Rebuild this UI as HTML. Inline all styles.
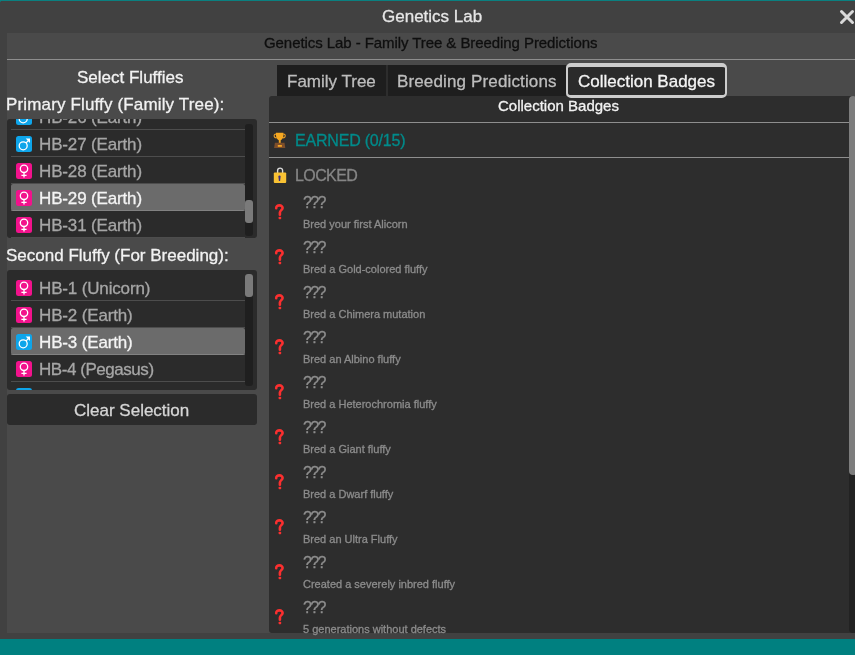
<!DOCTYPE html>
<html><head><meta charset="utf-8">
<style>
*{margin:0;padding:0;box-sizing:border-box}
body{will-change:transform}
html,body{width:855px;height:655px;overflow:hidden;background:#414141;font-family:"Liberation Sans",sans-serif}
.a{position:absolute}
.t{position:absolute;white-space:nowrap;line-height:1;-webkit-text-stroke:0.3px currentColor}
#teal-top{left:0;top:0;width:855px;height:1px;background:#0a8080}
#teal-bot{left:0;top:639px;width:855px;height:16px;background:#008080}
#panel{left:7px;top:33px;width:848px;height:600px;background:#4a4a4a}
.hline{height:1px;background:#8e8e8e}
.list{background:#2b2b2b;border-radius:3px;overflow:hidden}
.row{position:absolute;left:4px;width:234px;height:27px}
.sep{position:absolute;left:4px;width:234px;height:1px;background:rgba(255,255,255,0.16);z-index:2}
.sel{position:absolute;left:4px;width:234px;height:26px;background:#6b6b6b;border-radius:2px}
.ic{position:absolute;left:9px;width:16px;height:16px}
.ic svg{display:block}
.it{position:absolute;left:32px;font-size:17px;letter-spacing:-0.15px;color:#a6a6a6;white-space:nowrap;line-height:17px;-webkit-text-stroke:0.3px currentColor}
.sb{position:absolute;width:8px;background:#1f1f1f;border-radius:3px}
.gr{position:absolute;width:8px;background:#7a7a7a;border-radius:3px}
.tab{position:absolute;top:65px;height:31px;background:#1e1e1e}
.q{position:absolute;left:270px;width:20px;height:22px}
.q svg{display:block}
.qq{left:303px;font-size:16px;color:#8e8e8e;letter-spacing:-1.6px}
.ds{left:303px;font-size:11px;color:#8c8c8c}
</style></head><body>
<div class="a" id="teal-top"></div>
<div class="a" style="left:0;top:1px;width:1px;height:1px;background:#1a6a6a"></div>
<div class="t" style="left:382px;top:8px;font-size:17px;color:#e6e6e6">Genetics Lab</div>
<svg class="a" style="left:839px;top:9px" width="16" height="16" viewBox="0 0 16 16"><path d="M2.5 2.5L13.5 13.5M13.5 2.5L2.5 13.5" stroke="#d9d9d9" stroke-width="3" stroke-linecap="round"/></svg>
<div class="a" id="panel"></div>
<div class="t" style="left:264px;top:35px;font-size:15px;letter-spacing:-0.07px;color:#0f0f0f">Genetics Lab - Family Tree &amp; Breeding Predictions</div>
<div class="a hline" style="left:7px;top:59px;width:848px"></div>

<!-- left column -->
<div class="t" style="left:77px;top:69px;font-size:17px;color:#f2f2f2">Select Fluffies</div>
<div class="t" style="left:6px;top:96px;font-size:17px;letter-spacing:0.15px;color:#f2f2f2">Primary Fluffy (Family Tree):</div>

<div class="a list" style="left:7px;top:119px;width:250px;height:119px">
  <div class="sep" style="top:10px"></div>
  <div class="sep" style="top:37px"></div>
  <div class="sep" style="top:64px"></div>
  <div class="sep" style="top:118px"></div>
  <div class="sep" style="top:91px"></div>
  <div class="sel" style="top:65px;height:27px"></div>
  <div class="ic" style="top:-10px"><svg width="16" height="16" viewBox="0 0 16 16"><rect x="0" y="0" width="16" height="16" rx="2.5" fill="#0ea5ea"/><circle cx="7.2" cy="9.8" r="4" fill="none" stroke="#fff" stroke-width="1.3"/><path d="M10.1 6.9L13.2 3.8" stroke="#fff" stroke-width="1.3"/><path d="M9.7 2.6H14V6.9Z" fill="#fff"/></svg></div><div class="it" style="top:-10px">HB-26 (Earth)</div>
  <div class="ic" style="top:17px"><svg width="16" height="16" viewBox="0 0 16 16"><rect x="0" y="0" width="16" height="16" rx="2.5" fill="#0ea5ea"/><circle cx="7.2" cy="9.8" r="4" fill="none" stroke="#fff" stroke-width="1.3"/><path d="M10.1 6.9L13.2 3.8" stroke="#fff" stroke-width="1.3"/><path d="M9.7 2.6H14V6.9Z" fill="#fff"/></svg></div><div class="it" style="top:17px">HB-27 (Earth)</div>
  <div class="ic" style="top:44px"><svg width="16" height="16" viewBox="0 0 16 16"><rect x="0" y="0" width="16" height="16" rx="2.5" fill="#f2128c"/><circle cx="8" cy="5.8" r="3.7" fill="none" stroke="#fff" stroke-width="1.3"/><path d="M8 9.5V14.5M5.4 12.3H10.6" stroke="#fff" stroke-width="1.3"/></svg></div><div class="it" style="top:44px">HB-28 (Earth)</div>
  <div class="ic" style="top:71px"><svg width="16" height="16" viewBox="0 0 16 16"><rect x="0" y="0" width="16" height="16" rx="2.5" fill="#f2128c"/><circle cx="8" cy="5.8" r="3.7" fill="none" stroke="#fff" stroke-width="1.3"/><path d="M8 9.5V14.5M5.4 12.3H10.6" stroke="#fff" stroke-width="1.3"/></svg></div><div class="it" style="top:71px;color:#f4f4f4">HB-29 (Earth)</div>
  <div class="ic" style="top:98px"><svg width="16" height="16" viewBox="0 0 16 16"><rect x="0" y="0" width="16" height="16" rx="2.5" fill="#f2128c"/><circle cx="8" cy="5.8" r="3.7" fill="none" stroke="#fff" stroke-width="1.3"/><path d="M8 9.5V14.5M5.4 12.3H10.6" stroke="#fff" stroke-width="1.3"/></svg></div><div class="it" style="top:98px">HB-31 (Earth)</div>
  <div class="sb" style="left:238px;top:5px;height:112px"></div>
  <div class="gr" style="left:238px;top:81px;height:23px"></div>
</div>

<div class="t" style="left:6px;top:247px;font-size:17px;color:#f2f2f2">Second Fluffy (For Breeding):</div>
<div class="a list" style="left:7px;top:270px;width:250px;height:120px">
  <div class="sep" style="top:30px"></div>
  <div class="sep" style="top:57px"></div>
  <div class="sep" style="top:84px"></div>
  <div class="sep" style="top:111px"></div>
  <div class="sel" style="top:58px;height:27px"></div>
  <div class="ic" style="top:10px"><svg width="16" height="16" viewBox="0 0 16 16"><rect x="0" y="0" width="16" height="16" rx="2.5" fill="#f2128c"/><circle cx="8" cy="5.8" r="3.7" fill="none" stroke="#fff" stroke-width="1.3"/><path d="M8 9.5V14.5M5.4 12.3H10.6" stroke="#fff" stroke-width="1.3"/></svg></div><div class="it" style="top:10px">HB-1 (Unicorn)</div>
  <div class="ic" style="top:37px"><svg width="16" height="16" viewBox="0 0 16 16"><rect x="0" y="0" width="16" height="16" rx="2.5" fill="#f2128c"/><circle cx="8" cy="5.8" r="3.7" fill="none" stroke="#fff" stroke-width="1.3"/><path d="M8 9.5V14.5M5.4 12.3H10.6" stroke="#fff" stroke-width="1.3"/></svg></div><div class="it" style="top:37px">HB-2 (Earth)</div>
  <div class="ic" style="top:64px"><svg width="16" height="16" viewBox="0 0 16 16"><rect x="0" y="0" width="16" height="16" rx="2.5" fill="#0ea5ea"/><circle cx="7.2" cy="9.8" r="4" fill="none" stroke="#fff" stroke-width="1.3"/><path d="M10.1 6.9L13.2 3.8" stroke="#fff" stroke-width="1.3"/><path d="M9.7 2.6H14V6.9Z" fill="#fff"/></svg></div><div class="it" style="top:64px;color:#f4f4f4">HB-3 (Earth)</div>
  <div class="ic" style="top:91px"><svg width="16" height="16" viewBox="0 0 16 16"><rect x="0" y="0" width="16" height="16" rx="2.5" fill="#f2128c"/><circle cx="8" cy="5.8" r="3.7" fill="none" stroke="#fff" stroke-width="1.3"/><path d="M8 9.5V14.5M5.4 12.3H10.6" stroke="#fff" stroke-width="1.3"/></svg></div><div class="it" style="top:91px;letter-spacing:-0.45px">HB-4 (Pegasus)</div>
  <div class="ic" style="top:118px"><svg width="16" height="16" viewBox="0 0 16 16"><rect x="0" y="0" width="16" height="16" rx="2.5" fill="#0ea5ea"/><circle cx="7.2" cy="9.8" r="4" fill="none" stroke="#fff" stroke-width="1.3"/><path d="M10.1 6.9L13.2 3.8" stroke="#fff" stroke-width="1.3"/><path d="M9.7 2.6H14V6.9Z" fill="#fff"/></svg></div>
  <div class="sb" style="left:238px;top:4px;height:112px"></div>
  <div class="gr" style="left:238px;top:4px;height:23px"></div>
</div>

<div class="a" style="left:7px;top:394px;width:250px;height:31px;background:#2b2b2b;border-radius:3px"></div>
<div class="t" style="left:74px;top:402px;font-size:17px;color:#d6d6d6">Clear Selection</div>

<!-- tabs -->
<div class="a" style="left:386px;top:65px;width:2px;height:31px;background:#2d2d2d"></div>
<div class="tab" style="left:277px;width:109px"></div>
<div class="tab" style="left:388px;width:178px"></div>
<div class="t" style="left:287px;top:73px;font-size:17px;color:#bdbdbd">Family Tree</div>
<div class="t" style="left:397px;top:73px;font-size:17px;letter-spacing:0.14px;color:#bdbdbd">Breeding Predictions</div>

<!-- right panel -->
<div class="a" style="left:269px;top:96px;width:586px;height:537px;background:#2d2d2d;border-radius:3px 0 0 3px"></div>
<div class="a" style="left:566px;top:63px;width:161px;height:35px;background:#2b2b2b;border:solid #cdcdcd;border-width:4px 2px 3px 2px;border-radius:5px"></div>
<div class="t" style="left:578px;top:73px;font-size:17px;color:#f4f4f4">Collection Badges</div>

<div class="t" style="left:498px;top:98px;font-size:15px;color:#f2f2f2">Collection Badges</div>
<div class="a hline" style="left:269px;top:122px;width:580px"></div>
<svg class="a" style="left:270px;top:130px" width="20" height="20" viewBox="0 0 20 20"><path d="M6.2 4.2C3.6 3.6 3.2 7.4 6.6 7.9M13.2 4.2C15.8 3.6 16.2 7.4 12.8 7.9" fill="none" stroke="#e69a24" stroke-width="1.1"/><path d="M6 2.8H13.4V5.8C13.4 8.4 11.6 9.9 10.7 10.3V12.9H8.8V10.3C7.9 9.9 6 8.4 6 5.8Z" fill="#f6a821"/><path d="M4.9 12.8H14.5L15.3 17.9H4.1Z" fill="#7d4e2a"/><rect x="7.8" y="15" width="4.1" height="1.8" fill="#f3a524"/></svg>
<div class="t" style="left:295px;top:133px;font-size:16px;letter-spacing:-0.2px;color:#018b8b">EARNED (0/15)</div>
<div class="a hline" style="left:269px;top:157px;width:580px"></div>
<svg class="a" style="left:270px;top:165px" width="20" height="20" viewBox="0 0 20 20"><path d="M7.6 8.2V5.6A2.5 2.5 0 0 1 12.6 5.6V8.2" fill="none" stroke="#d9d9d9" stroke-width="1.4"/><rect x="3.8" y="7.6" width="12.4" height="10.4" rx="1" fill="#f9c233"/><path d="M8.4 11.5A1.1 1.1 0 0 1 10.6 11.5L10.1 15.9H8.9Z" fill="#3b2c7e"/></svg>
<div class="t" style="left:295px;top:168px;font-size:16px;letter-spacing:-0.6px;color:#868686">LOCKED</div>

<div id="badges">
<div class="q" style="top:200px"><svg width="20" height="22" viewBox="0 0 20 22"><path d="M6.2 8.2C6.1 6.3 7.6 5.4 9.5 5.4C11.3 5.4 12.6 6.5 12.6 8C12.6 9.9 10 10.4 9.9 12.5V14.7" fill="none" stroke="#fb2f2f" stroke-width="2.6" stroke-linecap="round"/><rect x="8.6" y="16.8" width="2.6" height="2.4" rx="0.7" fill="#fb2f2f"/></svg></div>
<div class="t qq" style="top:195px">???</div>
<div class="t ds" style="top:219px">Bred your first Alicorn</div>
<div class="q" style="top:245px"><svg width="20" height="22" viewBox="0 0 20 22"><path d="M6.2 8.2C6.1 6.3 7.6 5.4 9.5 5.4C11.3 5.4 12.6 6.5 12.6 8C12.6 9.9 10 10.4 9.9 12.5V14.7" fill="none" stroke="#fb2f2f" stroke-width="2.6" stroke-linecap="round"/><rect x="8.6" y="16.8" width="2.6" height="2.4" rx="0.7" fill="#fb2f2f"/></svg></div>
<div class="t qq" style="top:240px">???</div>
<div class="t ds" style="top:264px">Bred a Gold-colored fluffy</div>
<div class="q" style="top:290px"><svg width="20" height="22" viewBox="0 0 20 22"><path d="M6.2 8.2C6.1 6.3 7.6 5.4 9.5 5.4C11.3 5.4 12.6 6.5 12.6 8C12.6 9.9 10 10.4 9.9 12.5V14.7" fill="none" stroke="#fb2f2f" stroke-width="2.6" stroke-linecap="round"/><rect x="8.6" y="16.8" width="2.6" height="2.4" rx="0.7" fill="#fb2f2f"/></svg></div>
<div class="t qq" style="top:285px">???</div>
<div class="t ds" style="top:309px">Bred a Chimera mutation</div>
<div class="q" style="top:335px"><svg width="20" height="22" viewBox="0 0 20 22"><path d="M6.2 8.2C6.1 6.3 7.6 5.4 9.5 5.4C11.3 5.4 12.6 6.5 12.6 8C12.6 9.9 10 10.4 9.9 12.5V14.7" fill="none" stroke="#fb2f2f" stroke-width="2.6" stroke-linecap="round"/><rect x="8.6" y="16.8" width="2.6" height="2.4" rx="0.7" fill="#fb2f2f"/></svg></div>
<div class="t qq" style="top:330px">???</div>
<div class="t ds" style="top:354px">Bred an Albino fluffy</div>
<div class="q" style="top:380px"><svg width="20" height="22" viewBox="0 0 20 22"><path d="M6.2 8.2C6.1 6.3 7.6 5.4 9.5 5.4C11.3 5.4 12.6 6.5 12.6 8C12.6 9.9 10 10.4 9.9 12.5V14.7" fill="none" stroke="#fb2f2f" stroke-width="2.6" stroke-linecap="round"/><rect x="8.6" y="16.8" width="2.6" height="2.4" rx="0.7" fill="#fb2f2f"/></svg></div>
<div class="t qq" style="top:375px">???</div>
<div class="t ds" style="top:399px">Bred a Heterochromia fluffy</div>
<div class="q" style="top:425px"><svg width="20" height="22" viewBox="0 0 20 22"><path d="M6.2 8.2C6.1 6.3 7.6 5.4 9.5 5.4C11.3 5.4 12.6 6.5 12.6 8C12.6 9.9 10 10.4 9.9 12.5V14.7" fill="none" stroke="#fb2f2f" stroke-width="2.6" stroke-linecap="round"/><rect x="8.6" y="16.8" width="2.6" height="2.4" rx="0.7" fill="#fb2f2f"/></svg></div>
<div class="t qq" style="top:420px">???</div>
<div class="t ds" style="top:444px">Bred a Giant fluffy</div>
<div class="q" style="top:470px"><svg width="20" height="22" viewBox="0 0 20 22"><path d="M6.2 8.2C6.1 6.3 7.6 5.4 9.5 5.4C11.3 5.4 12.6 6.5 12.6 8C12.6 9.9 10 10.4 9.9 12.5V14.7" fill="none" stroke="#fb2f2f" stroke-width="2.6" stroke-linecap="round"/><rect x="8.6" y="16.8" width="2.6" height="2.4" rx="0.7" fill="#fb2f2f"/></svg></div>
<div class="t qq" style="top:465px">???</div>
<div class="t ds" style="top:489px">Bred a Dwarf fluffy</div>
<div class="q" style="top:515px"><svg width="20" height="22" viewBox="0 0 20 22"><path d="M6.2 8.2C6.1 6.3 7.6 5.4 9.5 5.4C11.3 5.4 12.6 6.5 12.6 8C12.6 9.9 10 10.4 9.9 12.5V14.7" fill="none" stroke="#fb2f2f" stroke-width="2.6" stroke-linecap="round"/><rect x="8.6" y="16.8" width="2.6" height="2.4" rx="0.7" fill="#fb2f2f"/></svg></div>
<div class="t qq" style="top:510px">???</div>
<div class="t ds" style="top:534px">Bred an Ultra Fluffy</div>
<div class="q" style="top:560px"><svg width="20" height="22" viewBox="0 0 20 22"><path d="M6.2 8.2C6.1 6.3 7.6 5.4 9.5 5.4C11.3 5.4 12.6 6.5 12.6 8C12.6 9.9 10 10.4 9.9 12.5V14.7" fill="none" stroke="#fb2f2f" stroke-width="2.6" stroke-linecap="round"/><rect x="8.6" y="16.8" width="2.6" height="2.4" rx="0.7" fill="#fb2f2f"/></svg></div>
<div class="t qq" style="top:555px">???</div>
<div class="t ds" style="top:579px">Created a severely inbred fluffy</div>
<div class="q" style="top:605px"><svg width="20" height="22" viewBox="0 0 20 22"><path d="M6.2 8.2C6.1 6.3 7.6 5.4 9.5 5.4C11.3 5.4 12.6 6.5 12.6 8C12.6 9.9 10 10.4 9.9 12.5V14.7" fill="none" stroke="#fb2f2f" stroke-width="2.6" stroke-linecap="round"/><rect x="8.6" y="16.8" width="2.6" height="2.4" rx="0.7" fill="#fb2f2f"/></svg></div>
<div class="t qq" style="top:600px">???</div>
<div class="t ds" style="top:624px">5 generations without defects</div>
</div>

<div class="a" style="left:849px;top:96px;width:8px;height:537px;background:#222;border-radius:4px"></div>
<div class="a" style="left:849px;top:96px;width:8px;height:379px;background:#7d7d7d;border-radius:4px"></div>

<div class="a" id="teal-bot"></div>
</body></html>
